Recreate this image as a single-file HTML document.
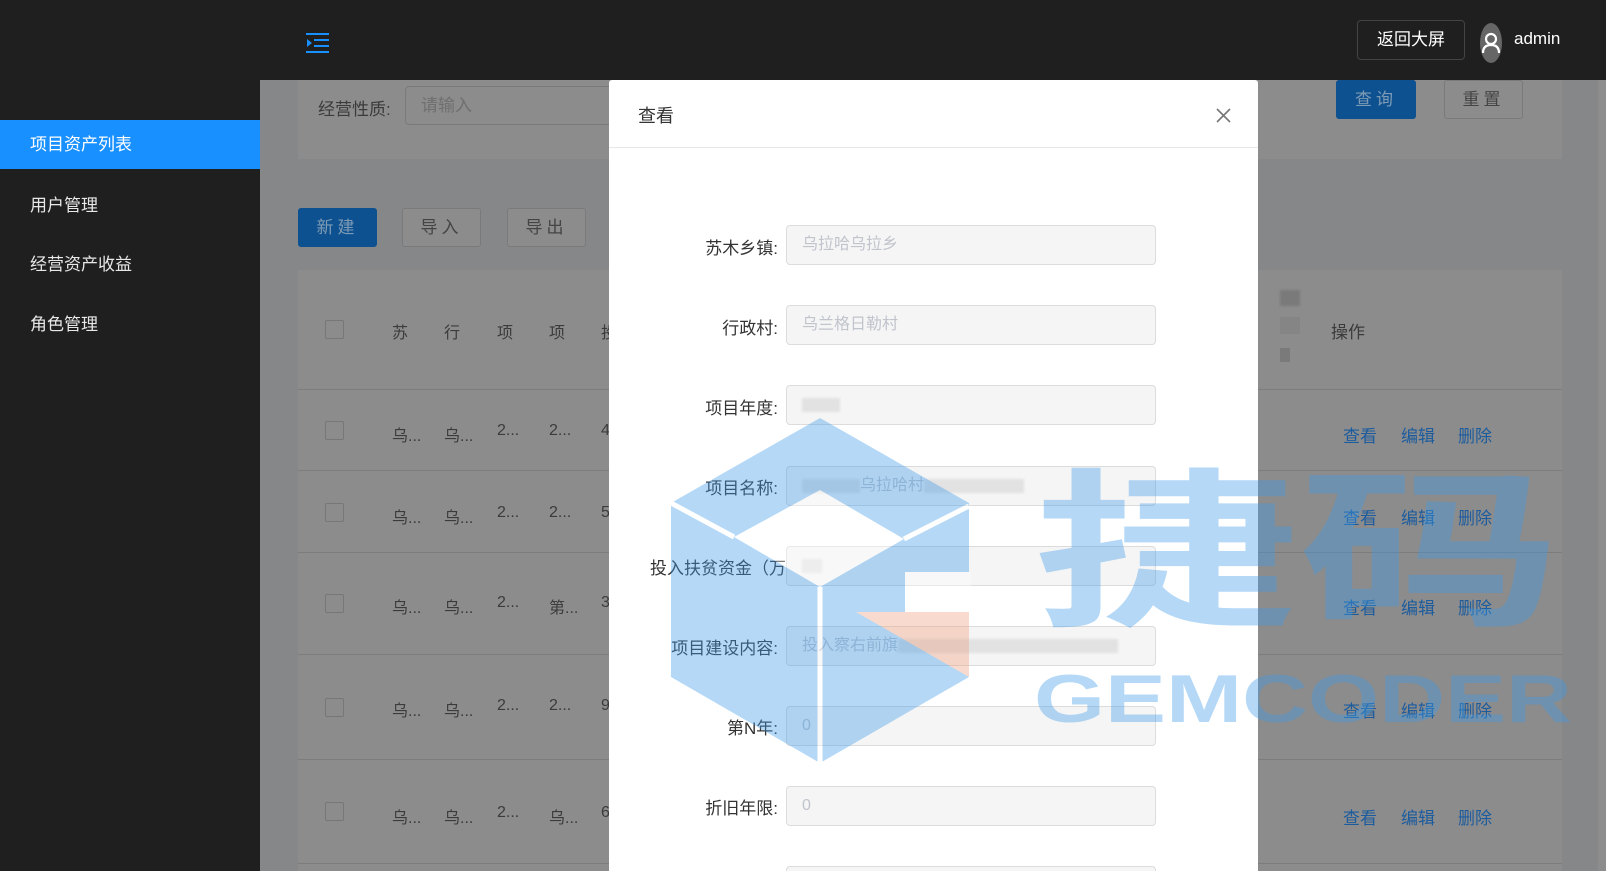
<!DOCTYPE html>
<html style="overflow:hidden;width:1606px;height:871px"><head><meta charset="utf-8"><style>
*{box-sizing:border-box;margin:0;padding:0}
body{width:1606px;height:871px;overflow:hidden;background:#868789;font-family:"Liberation Sans","Noto Sans CJK SC",sans-serif;position:relative}
.abs{position:absolute}
.hdr{left:0;top:0;width:1606px;height:80px;background:#1f1f1f}
.side{left:0;top:80px;width:260px;height:791px;background:#1f1f1f}
.side div{position:absolute;left:0;width:260px;height:49px;line-height:49px;padding-left:30px;color:#e8e8e8;font-size:17px}
.card{background:#8c8c8c}
.btn{position:absolute;height:39px;border:1px solid #7a7a7a;border-radius:3px;text-align:center;line-height:37px;font-size:17px;color:#444;letter-spacing:4px;background:#8c8c8c}
.btn.p{background:#0d5190;border-color:#0d5190;color:#7e9ab4}
.cb{position:absolute;width:19px;height:19px;border:1px solid #777;border-radius:2px}
.row{position:absolute;left:298px;width:1264px;border-top:1px solid #7c7c7c}
.t{position:absolute;font-size:16px;color:#3b3b3b;white-space:nowrap}
.lk{position:absolute;font-size:17px;color:#1c5c9e}
.modal{left:609px;top:80px;width:649px;height:791px;background:#fff;border-radius:3px 3px 0 0;overflow:hidden}
.lab{position:absolute;right:480px;font-size:17px;color:#333;text-align:right;white-space:nowrap}
.inp{position:absolute;left:177px;width:370px;height:40px;background:#f5f5f5;border:1px solid #dcdcdc;border-radius:4px;font-size:16px;color:#c0c4cc;line-height:38px;padding-left:15px;white-space:nowrap;overflow:hidden}
.blur{display:inline-block;height:14px;background:#e2e2e2;vertical-align:middle;filter:blur(1px)}
</style></head><body>
<div class="abs hdr"></div>
<svg class="abs" style="left:306px;top:33px" width="24" height="20" viewBox="0 0 24 20"><rect x="0" y="0" width="23" height="2" fill="#1890ff"/><rect x="8" y="6" width="15" height="2" fill="#1890ff"/><rect x="8" y="12" width="15" height="2" fill="#1890ff"/><rect x="0" y="18" width="23" height="2" fill="#1890ff"/><path d="M1 6 L6 10 L1 14Z" fill="#1890ff"/></svg>
<div class="abs" style="left:1357px;top:20px;width:108px;height:40px;border:1px solid #444;border-radius:4px;color:#fff;font-size:17px;text-align:center;line-height:38px">返回大屏</div>
<div class="abs" style="left:1480px;top:23px;width:22px;height:40px;border-radius:11px/20px;background:#666"></div>
<svg class="abs" style="left:1481px;top:31px" width="20" height="24" viewBox="0 0 20 24"><circle cx="10" cy="8" r="5" fill="none" stroke="#fff" stroke-width="2.2"/><path d="M2 22 Q2 14 10 14 Q18 14 18 22" fill="none" stroke="#fff" stroke-width="2.2"/></svg>
<div class="abs" style="left:1514px;top:29px;color:#fff;font-size:17px">admin</div>

<div class="abs side">
<div style="top:40px;background:#1890ff;color:#fff">项目资产列表</div>
<div style="top:101px">用户管理</div>
<div style="top:160px">经营资产收益</div>
<div style="top:220px">角色管理</div>
</div>
<div class="abs" style="left:1598px;top:80px;width:8px;height:791px;background:#8d8d8d"></div>

<div class="abs card" style="left:298px;top:80px;width:1264px;height:79px"></div>
<div class="t" style="left:318px;top:95px;font-size:17px">经营性质:</div>
<div class="abs" style="left:405px;top:86px;width:220px;height:39px;border:1px solid #7a7a7a;border-radius:4px;color:#6f6f6f;font-size:17px;line-height:37px;padding-left:15px;background:#8c8c8c">请输入</div>
<div class="btn p" style="left:1336px;top:80px;width:80px">查询</div>
<div class="btn" style="left:1444px;top:80px;width:79px">重置</div>

<div class="btn p" style="left:298px;top:208px;width:79px">新建</div>
<div class="btn" style="left:402px;top:208px;width:79px">导入</div>
<div class="btn" style="left:507px;top:208px;width:79px">导出</div>

<div class="abs card" style="left:298px;top:270px;width:1264px;height:601px"></div>
<div class="cb" style="left:325px;top:320px"></div>
<div class="t" style="left:392px;top:319px">苏</div><div class="t" style="left:444px;top:319px">行</div><div class="t" style="left:497px;top:319px">项</div><div class="t" style="left:549px;top:319px">项</div><div class="t" style="left:601px;top:319px">投</div>
<div class="abs" style="left:1280px;top:290px;width:20px;height:16px;background:#7a7a7a;filter:blur(1px)"></div>
<div class="abs" style="left:1280px;top:317px;width:20px;height:17px;background:#858585"></div>
<div class="abs" style="left:1280px;top:348px;width:10px;height:14px;background:#7a7a7a"></div>
<div class="t" style="left:1331px;top:318px;font-size:17px">操作</div>

<div class="row" style="top:389px"></div>
<div class="row" style="top:470px"></div>
<div class="row" style="top:552px"></div>
<div class="row" style="top:654px"></div>
<div class="row" style="top:759px"></div>
<div class="row" style="top:863px"></div>

<div class="cb" style="left:325px;top:421px"></div><div class="t" style="left:392px;top:422px">乌...</div><div class="t" style="left:444px;top:422px">乌...</div><div class="t" style="left:497px;top:422px">2...</div><div class="t" style="left:549px;top:422px">2...</div><div class="t" style="left:601px;top:422px">4</div>
<div class="cb" style="left:325px;top:503px"></div><div class="t" style="left:392px;top:504px">乌...</div><div class="t" style="left:444px;top:504px">乌...</div><div class="t" style="left:497px;top:504px">2...</div><div class="t" style="left:549px;top:504px">2...</div><div class="t" style="left:601px;top:504px">5</div>
<div class="cb" style="left:325px;top:594px"></div><div class="t" style="left:392px;top:594px">乌...</div><div class="t" style="left:444px;top:594px">乌...</div><div class="t" style="left:497px;top:594px">2...</div><div class="t" style="left:549px;top:594px">第...</div><div class="t" style="left:601px;top:594px">3</div>
<div class="cb" style="left:325px;top:698px"></div><div class="t" style="left:392px;top:697px">乌...</div><div class="t" style="left:444px;top:697px">乌...</div><div class="t" style="left:497px;top:697px">2...</div><div class="t" style="left:549px;top:697px">2...</div><div class="t" style="left:601px;top:697px">9</div>
<div class="cb" style="left:325px;top:802px"></div><div class="t" style="left:392px;top:804px">乌...</div><div class="t" style="left:444px;top:804px">乌...</div><div class="t" style="left:497px;top:804px">2...</div><div class="t" style="left:549px;top:804px">乌...</div><div class="t" style="left:601px;top:804px">6</div>

<div class="lk" style="left:1343px;top:422px">查看</div><div class="lk" style="left:1401px;top:422px">编辑</div><div class="lk" style="left:1458px;top:422px">删除</div>
<div class="lk" style="left:1343px;top:504px">查看</div><div class="lk" style="left:1401px;top:504px">编辑</div><div class="lk" style="left:1458px;top:504px">删除</div>
<div class="lk" style="left:1343px;top:594px">查看</div><div class="lk" style="left:1401px;top:594px">编辑</div><div class="lk" style="left:1458px;top:594px">删除</div>
<div class="lk" style="left:1343px;top:697px">查看</div><div class="lk" style="left:1401px;top:697px">编辑</div><div class="lk" style="left:1458px;top:697px">删除</div>
<div class="lk" style="left:1343px;top:804px">查看</div><div class="lk" style="left:1401px;top:804px">编辑</div><div class="lk" style="left:1458px;top:804px">删除</div>

<div class="abs modal">
<div class="abs" style="left:29px;top:22px;font-size:18px;color:#333">查看</div>
<svg class="abs" style="left:607px;top:28px" width="15" height="15" viewBox="0 0 15 15"><path d="M1 1L14 14M14 1L1 14" stroke="#777" stroke-width="1.6"/></svg>
<div class="abs" style="left:0;top:67px;width:649px;height:1px;background:#e8e8e8"></div>
<div class="lab" style="top:154px">苏木乡镇:</div><div class="inp" style="top:145px">乌拉哈乌拉乡</div>
<div class="lab" style="top:234px">行政村:</div><div class="inp" style="top:225px">乌兰格日勒村</div>
<div class="lab" style="top:314px">项目年度:</div><div class="inp" style="top:305px"><span class="blur" style="width:38px"></span></div>
<div class="lab" style="top:394px">项目名称:</div><div class="inp" style="top:386px"><span class="blur" style="width:58px"></span>乌拉哈村<span class="blur" style="width:100px"></span></div>
<div class="lab" style="top:474px;right:472px">投入扶贫资金（万</div><div class="inp" style="top:466px"><span class="blur" style="width:20px"></span></div>
<div class="lab" style="top:554px">项目建设内容:</div><div class="inp" style="top:546px">投入察右前旗<span class="blur" style="width:220px"></span></div>
<div class="lab" style="top:634px">第N年:</div><div class="inp" style="top:626px">0</div>
<div class="lab" style="top:714px">折旧年限:</div><div class="inp" style="top:706px">0</div>
<div class="inp" style="top:786px"></div>
</div>

<svg class="abs" style="left:0;top:0" width="1606" height="871" viewBox="0 0 1606 871">
<g opacity="0.38">
<path d="M820 418 L969 503 L969 677 L820 763 L671 677 L671 503Z" fill="#3d9be9"/>
<path d="M820 490 L904 539 L820 587 L734 537Z" fill="#fff"/>
<path d="M671 503 L734 537 M969 506 L904 539 M820 587 L820 763" stroke="#fff" stroke-width="5"/>
<rect x="905" y="572" width="66" height="40" fill="#fff"/>
<path d="M856 612 L969 612 L969 677Z" fill="#f0a07f"/>
<text x="1034" y="612" font-family="Noto Sans CJK SC,sans-serif" font-weight="bold" font-size="170" fill="#3d9be9" textLength="528" lengthAdjust="spacingAndGlyphs">捷码</text>
<text x="1034" y="722" font-family="Liberation Sans,sans-serif" font-weight="bold" font-size="68" fill="#3d9be9" textLength="538" lengthAdjust="spacingAndGlyphs">GEMCODER</text>
</g>
</svg>
</body></html>
